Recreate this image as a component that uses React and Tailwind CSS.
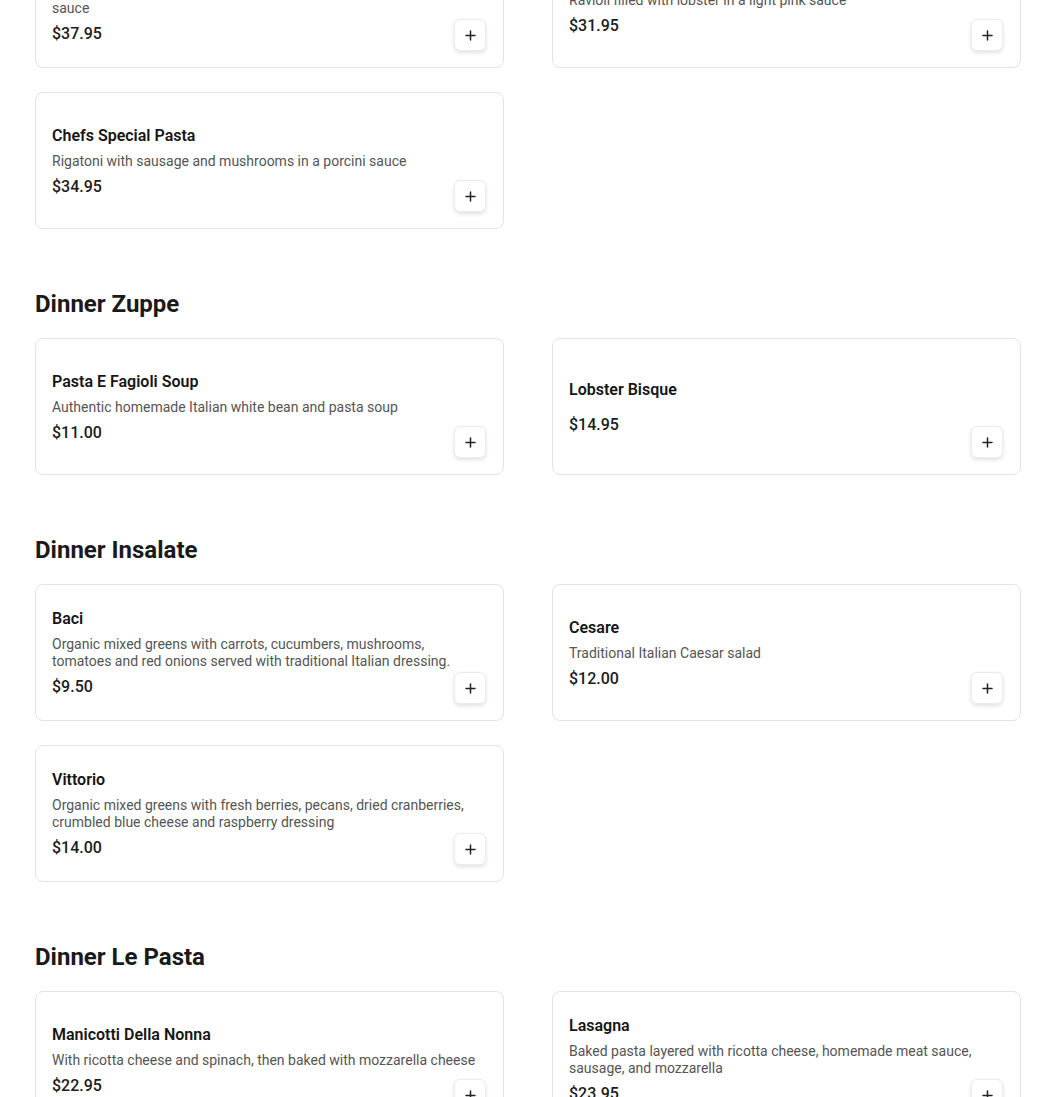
import React from "react";

const sections = [
  {
    title: "Dinner Specialties",
    items: [
      {
        name: "Linguine Frutti di Mare",
        desc: "Shrimp, scallops, clams and mussels sautéed in a spicy marinara sauce",
        price: "$37.95",
      },
      {
        name: "Lobster Ravioli",
        desc: "Ravioli filled with lobster in a light pink sauce",
        price: "$31.95",
      },
      {
        name: "Chefs Special Pasta",
        desc: "Rigatoni with sausage and mushrooms in a porcini sauce",
        price: "$34.95",
      },
    ],
  },
  {
    title: "Dinner Zuppe",
    items: [
      {
        name: "Pasta E Fagioli Soup",
        desc: "Authentic homemade Italian white bean and pasta soup",
        price: "$11.00",
      },
      { name: "Lobster Bisque", desc: "", price: "$14.95" },
    ],
  },
  {
    title: "Dinner Insalate",
    items: [
      {
        name: "Baci",
        desc: "Organic mixed greens with carrots, cucumbers, mushrooms, tomatoes and red onions served with traditional Italian dressing.",
        price: "$9.50",
      },
      {
        name: "Cesare",
        desc: "Traditional Italian Caesar salad",
        price: "$12.00",
      },
      {
        name: "Vittorio",
        desc: "Organic mixed greens with fresh berries, pecans, dried cranberries, crumbled blue cheese and raspberry dressing",
        price: "$14.00",
      },
    ],
  },
  {
    title: "Dinner Le Pasta",
    items: [
      {
        name: "Manicotti Della Nonna",
        desc: "With ricotta cheese and spinach, then baked with mozzarella cheese",
        price: "$22.95",
      },
      {
        name: "Lasagna",
        desc: "Baked pasta layered with ricotta cheese, homemade meat sauce, sausage, and mozzarella",
        price: "$23.95",
      },
    ],
  },
];

function PlusIcon() {
  return (
    <svg width="11" height="11" viewBox="0 0 11 11" fill="none">
      <path d="M5.5 1v9M1 5.5h9" stroke="#222" strokeWidth="1.5" strokeLinecap="round" />
    </svg>
  );
}

function Card({ item }) {
  return (
    <div className="relative flex h-[137px] items-center rounded-lg border border-[#e4e4e7] bg-white px-4">
      <div className="flex w-full flex-col pt-[1px]">
        <div className="text-[16px] font-semibold leading-6 text-[#161616]">{item.name}</div>
        {item.desc ? (
          <div className="mt-[5px] mb-[5px] text-[14px] leading-[17px] text-[#555]">{item.desc}</div>
        ) : (
          <div className="h-[11px]" />
        )}
        <div className="text-[16px] font-medium leading-6 text-[#1c1c1c]">{item.price}</div>
      </div>
      <button className="absolute right-[17px] bottom-4 flex h-8 w-8 items-center justify-center rounded-md border border-[#ececec] bg-white shadow-[0_2px_4px_rgba(0,0,0,0.12)]">
        <PlusIcon />
      </button>
    </div>
  );
}

export default function App() {
  return (
    <div
      className="min-h-screen overflow-hidden bg-white"
      style={{ fontFamily: "Roboto, 'Noto Sans', 'Liberation Sans', sans-serif" }}
    >
      <div className="mt-[-119px] ml-[35px] flex w-[986px] flex-col gap-[59px] pb-10">
        {sections.map((s) => (
          <section key={s.title} className="flex flex-col">
            <h2 className="mb-[18px] text-[24px] font-bold leading-8 text-[#1a1a1a]">{s.title}</h2>
            <div className="grid grid-cols-2 gap-x-12 gap-y-6">
              {s.items.map((it) => (
                <Card key={it.name} item={it} />
              ))}
            </div>
          </section>
        ))}
      </div>
    </div>
  );
}
